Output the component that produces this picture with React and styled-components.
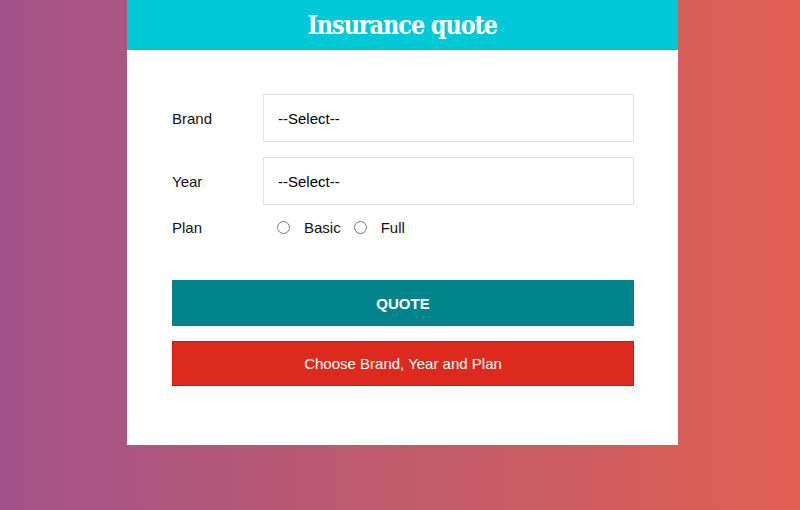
import React from 'react';
import styled, { createGlobalStyle } from 'styled-components';

const GlobalStyle = createGlobalStyle`
    html, body {
        margin: 0;
        padding: 0;
        height: 100%;
    }
    body {
        font-family: "Liberation Sans", Arial, sans-serif;
        background: linear-gradient(to right, #a3528b 0%, #c05b6c 50%, #e15f52 100%);
        min-height: 510px;
    }
`;

const Page = styled.div`
    display: flex;
    justify-content: center;
    padding-left: 5px;
`;

const Card = styled.div`
    width: 551px;
    background: #fff;
`;

const Header = styled.header`
    height: 49px;
    background: #00c8d7;
    border-bottom: 1px solid #12b9c7;
    display: flex;
    align-items: center;
    justify-content: center;
    h1 {
        margin: 0;
        color: #fff;
        font-family: "DejaVu Serif", "Liberation Serif", serif;
        font-weight: bold;
        font-size: 26px;
        letter-spacing: -1.2px;
        transform: scaleX(0.86);
    }
`;

const Form = styled.form`
    padding: 44px 44px 59px 45px;
    display: flex;
    flex-direction: column;
`;

const Row = styled.div`
    display: flex;
    align-items: center;
    margin-bottom: ${props => props.gap ?? 15}px;
    label.field {
        width: 91px;
        font-size: 15px;
        color: #111;
    }
`;

const Select = styled.select`
    flex: 1;
    height: 48px;
    border: 1px solid #e1e1e1;
    border-radius: 0;
    background: #fff;
    appearance: none;
    padding: 0 14px;
    font-family: "Liberation Sans", Arial, sans-serif;
    font-size: 15px;
    color: #000;
`;

const Radios = styled.div`
    display: flex;
    align-items: center;
    padding-left: 12px;
    font-size: 15px;
    color: #111;
    input {
        margin: 0 14px 0 2px;
        width: 13px;
        height: 13px;
    }
    span {
        margin-right: 11px;
    }
`;

const Button = styled.button`
    height: ${props => props.h}px;
    margin-top: ${props => props.mt}px;
    border: 1px solid ${props => props.border};
    background: ${props => props.bg};
    color: #fff;
    font-family: "Liberation Sans", Arial, sans-serif;
    font-size: 15px;
    font-weight: ${props => props.bold ? 'bold' : 'normal'};
    text-transform: ${props => props.bold ? 'uppercase' : 'none'};
`;

const App = () => {
    return (
        <>
            <GlobalStyle />
            <Page>
                <Card>
                    <Header>
                        <h1>Insurance quote</h1>
                    </Header>
                    <Form onSubmit={e => e.preventDefault()}>
                        <Row>
                            <label className="field">Brand</label>
                            <Select defaultValue="">
                                <option value="">--Select--</option>
                            </Select>
                        </Row>
                        <Row gap={14}>
                            <label className="field">Year</label>
                            <Select defaultValue="">
                                <option value="">--Select--</option>
                            </Select>
                        </Row>
                        <Row gap={0}>
                            <label className="field">Plan</label>
                            <Radios>
                                <input type="radio" name="plan" value="basic" />
                                <span>Basic</span>
                                <input type="radio" name="plan" value="full" />
                                <span>Full</span>
                            </Radios>
                        </Row>
                        <Button h={46} mt={44} bg="#00838a" border="#0a7f86" bold>Quote</Button>
                        <Button h={45} mt={15} bg="#dc2a1f" border="#e00d0d" type="button">Choose Brand, Year and Plan</Button>
                    </Form>
                </Card>
            </Page>
        </>
    );
};

export default App;
